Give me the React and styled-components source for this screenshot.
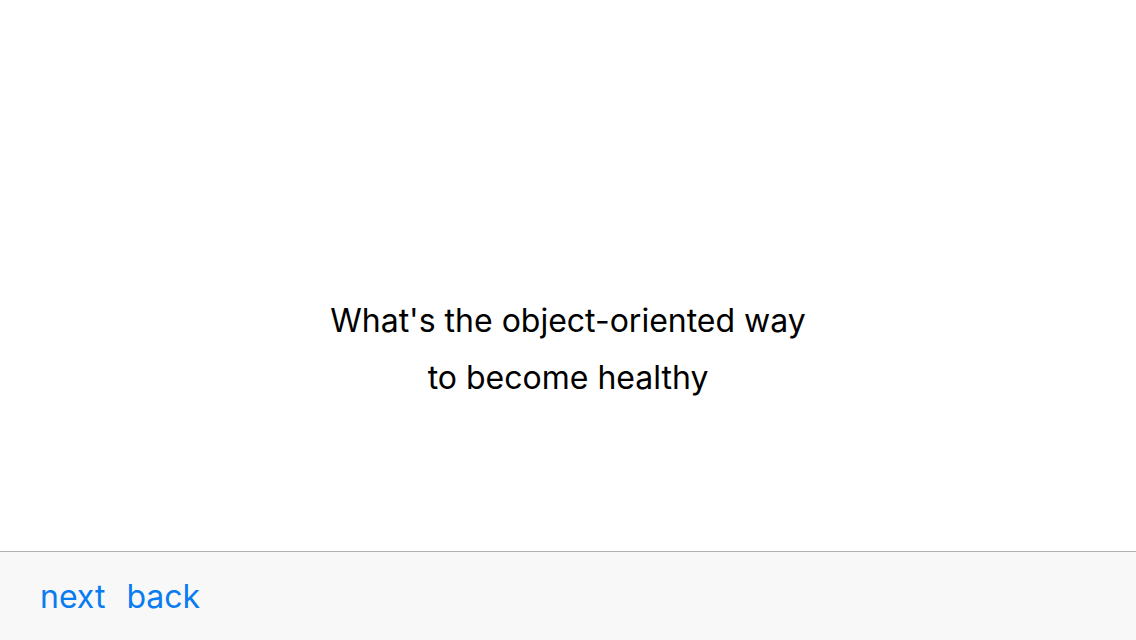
import React from "react";
import styled, { createGlobalStyle } from "styled-components";

const GlobalStyle = createGlobalStyle`
  html, body {
    margin: 0;
    padding: 0;
    background: #fff;
  }
  body {
    font-family: Inter, "Liberation Sans", Arial, sans-serif;
  }
`;

const Screen = styled.div`
  width: 1136px;
  height: 640px;
  display: flex;
  flex-direction: column;
  overflow: hidden;
`;

const Stage = styled.main`
  flex: 1;
  display: flex;
  flex-direction: column;
  align-items: center;
  padding-top: 292px;
  box-sizing: border-box;
`;

const Line = styled.p`
  margin: 0;
  font-size: 32px;
  line-height: 57px;
  color: #000;
  text-align: center;
`;

const Toolbar = styled.footer`
  height: 88px;
  flex-shrink: 0;
  border-top: 1px solid #b2b2b2;
  background: #f8f8f8;
  display: flex;
  align-items: center;
  gap: 21px;
  padding: 0 40px;
  box-sizing: content-box;
`;

const BarButton = styled.button`
  border: 0;
  background: none;
  padding: 0;
  font-family: Inter, "Liberation Sans", Arial, sans-serif;
  font-size: 32px;
  color: #0a7bf0;
  cursor: pointer;
`;

const App = () => {
  return (
    <>
      <GlobalStyle />
      <Screen>
        <Stage>
          <Line>What's the object-oriented way</Line>
          <Line>to become healthy</Line>
        </Stage>
        <Toolbar>
          <BarButton>next</BarButton>
          <BarButton>back</BarButton>
        </Toolbar>
      </Screen>
    </>
  );
};

export default App;
